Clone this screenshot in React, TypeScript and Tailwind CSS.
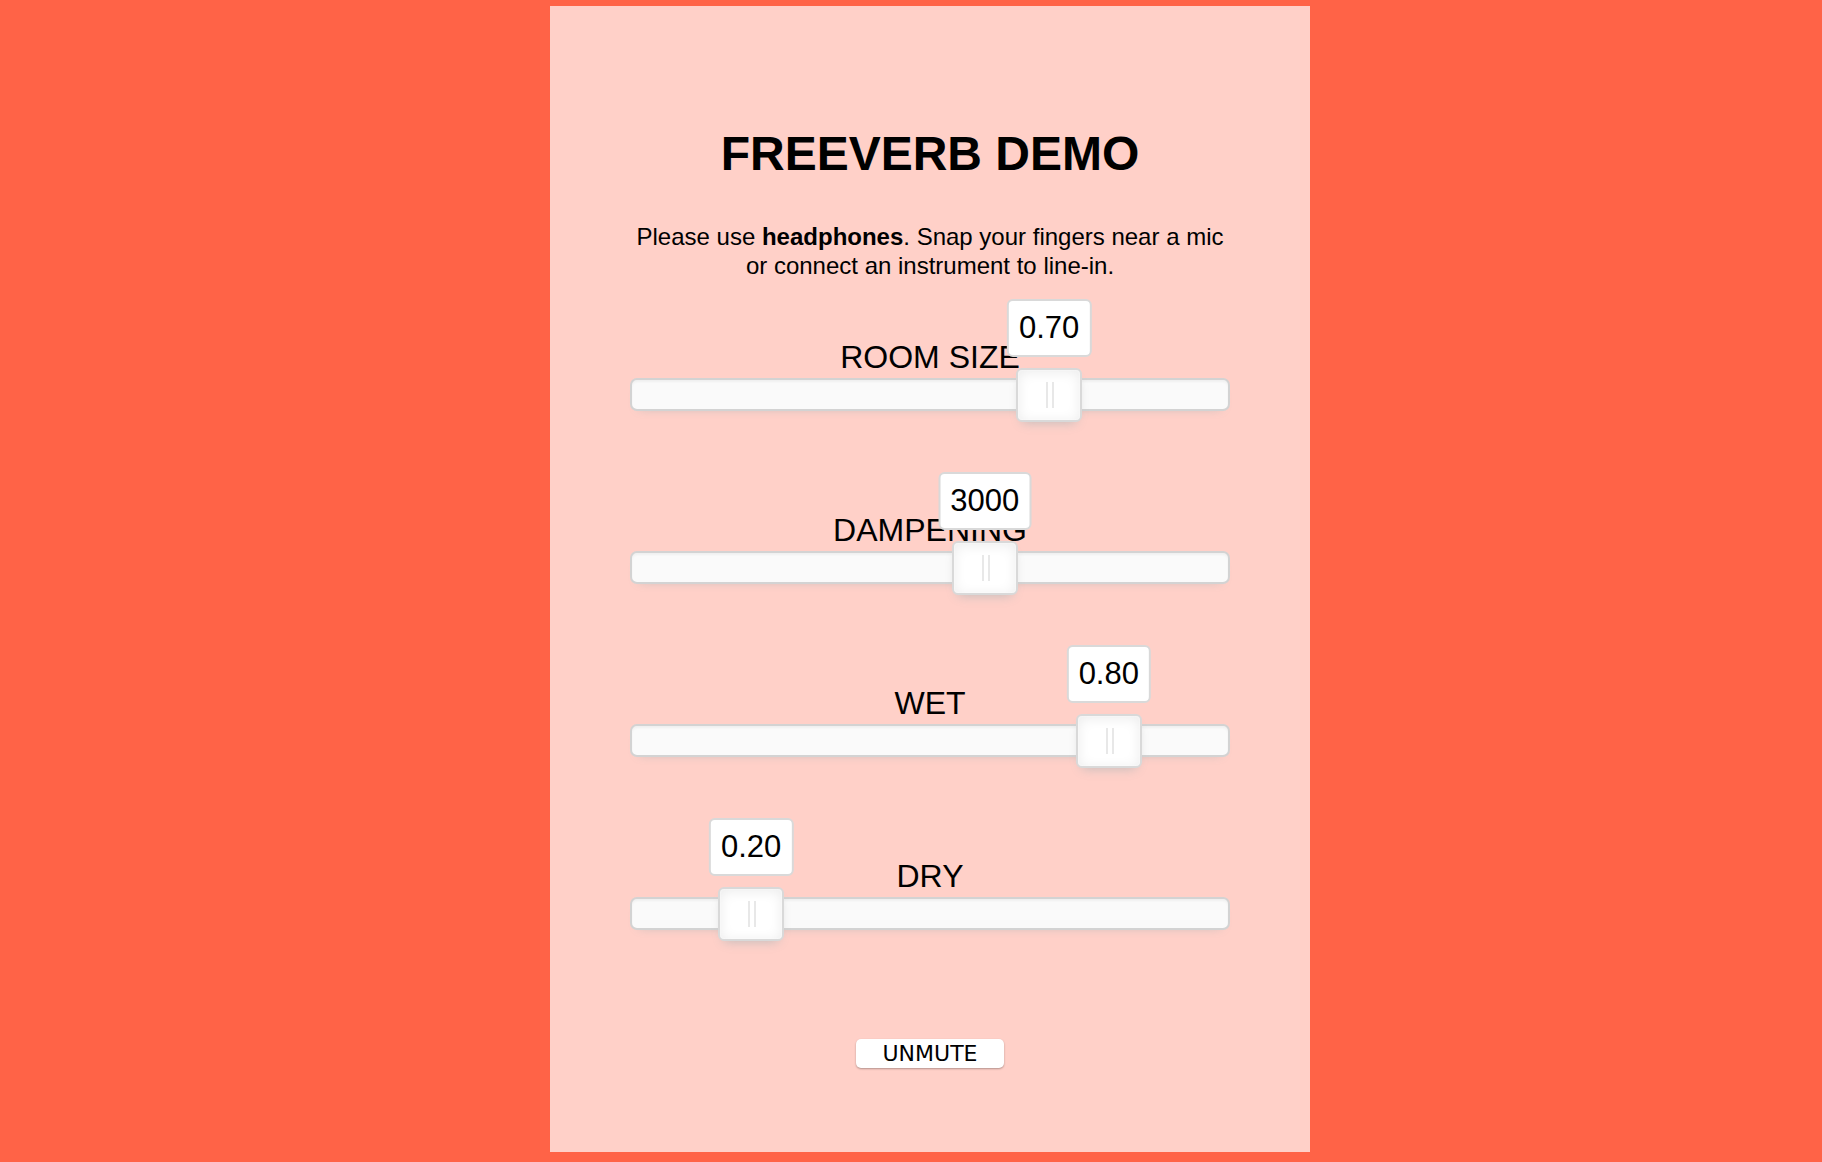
import React from 'react';

type Param = {
  label: string;
  value: string;
  pct: number; // position of the handle on the track, 0..1
};

const params: Param[] = [
  { label: 'ROOM SIZE', value: '0.70', pct: 0.7 },
  { label: 'DAMPENING', value: '3000', pct: (3000 - 100) / 4900 },
  { label: 'WET', value: '0.80', pct: 0.8 },
  { label: 'DRY', value: '0.20', pct: 0.2 },
];

function Slider({ label, value, pct }: Param) {
  return (
    <div className="flex flex-col">
      <div className="text-center text-[32px] leading-[31px] text-black">{label}</div>
      {/* track */}
      <div className="relative mt-[5px] h-[33px] rounded-[7px] border-2 border-[#d3d3d3] bg-[#fafafa] shadow-[inset_0_2px_2px_#f0f0f0,0_6px_11px_-9px_#bbb]">
        {/* handle */}
        <div
          className="absolute top-[-12px] h-[54px] w-[66px] rounded-[6px] border-2 border-[#d9d9d9] bg-white shadow-[inset_0_0_2px_#fff,inset_0_2px_13px_#ebebeb,0_6px_11px_-6px_#bbb]"
          style={{ left: `calc(${pct * 100}% - 33px)` }}
        >
          <div className="absolute top-[12px] left-[28px] h-[26px] w-[2px] bg-[#e8e8e8]"></div>
          <div className="absolute top-[12px] left-[34px] h-[26px] w-[2px] bg-[#e8e8e8]"></div>
          {/* tooltip */}
          <div className="absolute bottom-[63px] left-1/2 -translate-x-1/2 whitespace-nowrap rounded-[6px] border-2 border-[#d9d9d9] bg-white px-[10px] py-[10px] text-center text-[31px] leading-[34px] text-black">
            {value}
          </div>
        </div>
      </div>
    </div>
  );
}

export default function App() {
  return (
    <div
      className="min-h-screen bg-[#ff6347] pt-[6px] pb-[10px]"
      style={{ fontFamily: '"Liberation Sans", Arial, sans-serif' }}
    >
      <div className="ml-[550px] h-[1146px] w-[760px] bg-[#ffd0c8] pt-[120px]">
        <div className="mx-auto flex w-[600px] flex-col">
          <h1 className="text-center text-[48px] leading-[55px] font-bold text-black">
            FREEVERB DEMO
          </h1>

          <p className="mt-[41px] text-center text-[24px] leading-[29px] text-black">
            Please use <b>headphones</b>. Snap your fingers near a mic or connect an instrument
            to line-in.
          </p>

          {/* sliders */}
          <div className="mt-[62px] flex flex-col gap-[104px]">
            {params.map((p) => (
              <Slider key={p.label} {...p} />
            ))}
          </div>

          {/* unmute */}
          <div className="mt-[109px] flex justify-center">
            <button
              className="h-[29px] w-[148px] rounded-[5px] bg-white text-[22px] leading-[29px] text-black shadow-[0_1px_2px_rgba(0,0,0,0.3)]"
              style={{ fontFamily: '"DejaVu Sans", Verdana, sans-serif' }}
            >
              UNMUTE
            </button>
          </div>
        </div>
      </div>
    </div>
  );
}
